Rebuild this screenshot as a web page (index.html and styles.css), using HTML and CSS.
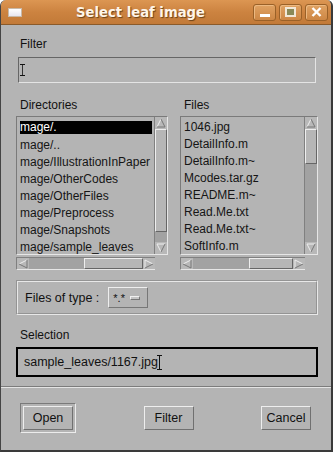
FILE: index.html
```html
<!DOCTYPE html>
<html lang="en">

<head>
    <meta charset="UTF-8">
    <title>Select leaf image</title>
    <link rel="stylesheet" href="styles.css">
</head>

<body>

    <div class="window">
        <div class="titlebar">
            <div class="app-icon"></div>
            <div class="title">Select leaf image</div>
            <div class="wm-buttons">
                <div class="wm-btn"><span class="min-glyph"></span></div>
                <div class="wm-btn"><span class="max-glyph"></span></div>
                <div class="wm-btn">
                    <svg width="11" height="10" viewBox="0 0 11 10"><path d="M1.5 1 L9.5 9 M9.5 1 L1.5 9" stroke="#fff" stroke-width="2.4"/></svg>
                </div>
            </div>
        </div>

        <div class="content">
            <div class="label">Filter</div>
            <div class="entry filter-entry"><span class="ibeam small"></span></div>

            <div class="lists">
                <div class="col">
                    <div class="label">Directories</div>
                    <div class="listbox">
                        <ul class="items">
                            <li class="selected">mage/.</li>
                            <li>mage/..</li>
                            <li>mage/IllustrationInPaper</li>
                            <li>mage/OtherCodes</li>
                            <li>mage/OtherFiles</li>
                            <li>mage/Preprocess</li>
                            <li>mage/Snapshots</li>
                            <li>mage/sample_leaves</li>
                        </ul>
                        <div class="vscroll">
                            <div class="arrow up"><svg width="10" height="10" viewBox="0 0 10 10"><path d="M1 9 L5 1" stroke="#eee"/><path d="M5 1 L9 9 L1 9" stroke="#777" fill="none"/></svg></div>
                            <div class="thumb" style="height: 103px"></div>
                            <div class="trough"></div>
                            <div class="arrow down"><svg width="10" height="10" viewBox="0 0 10 10"><path d="M1 1 L9 1 M1 1 L5 9" stroke="#eee" fill="none"/><path d="M5 9 L9 1" stroke="#777"/></svg></div>
                        </div>
                    </div>
                    <div class="hscroll">
                        <div class="arrow left"><svg width="10" height="10" viewBox="0 0 10 10"><path d="M9 1 L1 5" stroke="#eee"/><path d="M1 5 L9 9 L9 1" stroke="#777" fill="none"/></svg></div>
                        <div class="trough" style="width: 55px"></div>
                        <div class="thumb"></div>
                        <div class="arrow right"><svg width="10" height="10" viewBox="0 0 10 10"><path d="M1 9 L1 1 L9 5" stroke="#eee" fill="none"/><path d="M9 5 L1 9" stroke="#777"/></svg></div>
                    </div>
                </div>
                <div class="col">
                    <div class="label">Files</div>
                    <div class="listbox">
                        <ul class="items">
                            <li>1046.jpg</li>
                            <li>DetailInfo.m</li>
                            <li>DetailInfo.m~</li>
                            <li>Mcodes.tar.gz</li>
                            <li>README.m~</li>
                            <li>Read.Me.txt</li>
                            <li>Read.Me.txt~</li>
                            <li>SoftInfo.m</li>
                        </ul>
                        <div class="vscroll">
                            <div class="arrow up"><svg width="10" height="10" viewBox="0 0 10 10"><path d="M1 9 L5 1" stroke="#eee"/><path d="M5 1 L9 9 L1 9" stroke="#777" fill="none"/></svg></div>
                            <div class="thumb" style="height: 35px"></div>
                            <div class="trough"></div>
                            <div class="arrow down"><svg width="10" height="10" viewBox="0 0 10 10"><path d="M1 1 L9 1 M1 1 L5 9" stroke="#eee" fill="none"/><path d="M5 9 L9 1" stroke="#777"/></svg></div>
                        </div>
                    </div>
                    <div class="hscroll short">
                        <div class="arrow left"><svg width="10" height="10" viewBox="0 0 10 10"><path d="M9 1 L1 5" stroke="#eee"/><path d="M1 5 L9 9 L9 1" stroke="#777" fill="none"/></svg></div>
                        <div class="trough" style="width: 56px"></div>
                        <div class="thumb"></div>
                        <div class="arrow right"><svg width="10" height="10" viewBox="0 0 10 10"><path d="M1 9 L1 1 L9 5" stroke="#eee" fill="none"/><path d="M9 5 L1 9" stroke="#777"/></svg></div>
                    </div>
                </div>
            </div>

            <div class="types">
                <span>Files of type :</span>
                <div class="option-menu">
                    <span>*.*</span>
                    <span class="indicator"></span>
                </div>
            </div>

            <div class="label sel-label">Selection</div>
            <div class="entry selection">
                <span>sample_leaves/1167.jpg</span><span class="ibeam"></span>
            </div>
        </div>

        <div class="separator"></div>

        <div class="buttons">
            <div class="default-ring"><div class="button">Open</div></div>
            <div class="button">Filter</div>
            <div class="button">Cancel</div>
        </div>
    </div>

</body>

</html>
```

FILE: styles.css
```css
body {
    margin: 0;
    background-color: #ffffff;
    font-family: "Liberation Sans", Arial, sans-serif;
    font-size: 12px;
    color: #111;
}

.window {
    width: 333px;
    height: 452px;
    box-sizing: border-box;
    background-color: #b4b4b4;
    border-left: 1px solid #444;
    border-right: 2px solid #3a3a3a;
    border-bottom: 2px solid #3a3a3a;
    border-radius: 6px 6px 0 0;
    overflow: hidden;
}

.titlebar {
    height: 24px;
    display: flex;
    align-items: center;
    background: linear-gradient(#dc9652, #cc8340 50%, #c27a38);
    border-bottom: 1px solid #8a5a2a;
    padding: 0 3px 0 7px;
}

.app-icon {
    width: 14px;
    height: 9px;
    background: linear-gradient(#ffffff, #e8e6f0);
    border: 1px solid #c8b9a8;
    box-sizing: border-box;
}

.title {
    flex: 1;
    text-align: center;
    font-family: "DejaVu Sans", sans-serif;
    font-weight: bold;
    font-size: 13.2px;
    color: #fff5e8;
    text-shadow: 1px 1px 1px #6a4218;
    margin-left: 6px;
}

.wm-buttons {
    display: flex;
    gap: 3px;
}

.wm-btn {
    width: 23px;
    height: 17px;
    box-sizing: border-box;
    border: 1px solid #9a6128;
    border-radius: 3px;
    background: linear-gradient(#e0a262, #cd8745);
    box-shadow: inset 1px 1px 0 #ecb880;
    display: flex;
    align-items: center;
    justify-content: center;
}

.min-glyph {
    width: 10px;
    height: 3px;
    background-color: #fff;
    margin-top: 6px;
}

.max-glyph {
    width: 7px;
    height: 6px;
    border: 2px solid #f2e8d8;
    background-color: #8a8a58;
}

.content {
    padding: 11px 13px 0 15px;
}

.label {
    height: 16px;
    line-height: 16px;
    padding-left: 4px;
    margin-bottom: 5px;
}

.entry {
    box-sizing: border-box;
    display: flex;
    align-items: center;
}

.filter-entry {
    height: 26px;
    margin: 0 2px 14px 2px;
    border-top: 1px solid #666;
    border-left: 1px solid #666;
    border-right: 1px solid #e4e4e4;
    border-bottom: 1px solid #e4e4e4;
    padding-left: 3px;
}

.ibeam {
    display: inline-block;
    width: 1px;
    height: 14px;
    background-color: #111;
    position: relative;
}

.ibeam::before,
.ibeam::after {
    content: "";
    position: absolute;
    left: -2px;
    width: 5px;
    height: 1px;
    background-color: #111;
}

.ibeam::before {
    top: 0;
}

.ibeam::after {
    bottom: 0;
}

.ibeam.small {
    height: 12px;
    background-color: #333;
}

.lists {
    display: grid;
    grid-template-columns: 152px 138px;
    gap: 12px;
}

.lists .label {
    margin-bottom: 3px;
}

.listbox {
    height: 139px;
    display: flex;
    box-sizing: border-box;
    border-top: 1px solid #7a7a7a;
    border-left: 1px solid #7a7a7a;
    border-right: 1px solid #e6e6e6;
    border-bottom: 1px solid #e6e6e6;
}

.items {
    flex: 1;
    list-style: none;
    margin: 0;
    padding: 3px 0 0 3px;
    overflow: hidden;
    white-space: nowrap;
}

.items li {
    height: 17px;
    line-height: 15px;
    font-size: 12px;
    color: #151515;
}

.items li.selected {
    background-color: #000;
    color: #fff;
    width: 132px;
    line-height: 13px;
    height: 13px;
    margin-bottom: 4px;
    margin-top: 1px;
}

.vscroll {
    width: 12px;
    display: flex;
    flex-direction: column;
    border-left: 1px solid #808080;
    background-color: #a4a4a4;
}

.arrow {
    width: 12px;
    height: 12px;
    display: flex;
    align-items: center;
    justify-content: center;
    background-color: #b8b8b8;
    flex-shrink: 0;
}

.vscroll .thumb {
    box-sizing: border-box;
    border-top: 1px solid #eeeeee;
    border-left: 1px solid #eeeeee;
    border-bottom: 1px solid #666;
    border-right: 1px solid #666;
    background-color: #b6b6b6;
    flex-shrink: 0;
}

.vscroll .trough {
    flex: 1;
    background-color: #a2a2a2;
}

.hscroll {
    margin-top: 2px;
    width: 139px;
    height: 13px;
    display: flex;
    box-sizing: border-box;
    border-top: 1px solid #808080;
    border-left: 1px solid #808080;
    border-bottom: 1px solid #e6e6e6;
    background-color: #a2a2a2;
}

.hscroll.short {
    width: 125px;
}

.hscroll .arrow {
    height: 11px;
}

.hscroll .trough {
    background-color: #a2a2a2;
}

.hscroll .thumb {
    flex: 1;
    box-sizing: border-box;
    border-top: 1px solid #eeeeee;
    border-left: 1px solid #eeeeee;
    border-bottom: 1px solid #666;
    border-right: 1px solid #666;
    background-color: #b6b6b6;
}

.types {
    margin-top: 10px;
    height: 35px;
    box-sizing: border-box;
    border: 2px groove #e8e8e8;
    display: flex;
    align-items: center;
    padding-left: 7px;
    gap: 9px;
    font-size: 12.5px;
}

.option-menu {
    width: 40px;
    height: 21px;
    box-sizing: border-box;
    border-top: 1px solid #eeeeee;
    border-left: 1px solid #eeeeee;
    border-bottom: 1px solid #777;
    border-right: 1px solid #777;
    display: flex;
    align-items: center;
    padding-left: 4px;
    gap: 5px;
    font-size: 11px;
}

.indicator {
    width: 10px;
    height: 4px;
    box-sizing: border-box;
    border-top: 1px solid #f0f0f0;
    border-left: 1px solid #f0f0f0;
    border-bottom: 1px solid #777;
    border-right: 1px solid #777;
    background-color: #c4c4c4;
}

.sel-label {
    margin-top: 12px;
    margin-bottom: 4px;
}

.selection {
    height: 30px;
    border: 2px solid #000;
    padding-left: 6px;
    font-size: 12.5px;
}

.selection .ibeam {
    margin-left: 1px;
    height: 15px;
}

.separator {
    margin-top: 9px;
    height: 0;
    border-top: 1px solid #7c7c7c;
    border-bottom: 1px solid #e4e4e4;
}

.buttons {
    display: flex;
    justify-content: space-between;
    align-items: center;
    padding: 0 20px 0 19px;
    margin-top: 15px;
}

.default-ring {
    padding: 2px;
    border-top: 1px solid #7a7a7a;
    border-left: 1px solid #7a7a7a;
    border-bottom: 1px solid #ececec;
    border-right: 1px solid #ececec;
}

.button {
    width: 50px;
    height: 24px;
    box-sizing: border-box;
    border-top: 1px solid #eeeeee;
    border-left: 1px solid #eeeeee;
    border-bottom: 1px solid #707070;
    border-right: 1px solid #707070;
    display: flex;
    align-items: center;
    justify-content: center;
    font-size: 12.5px;
    color: #111;
}
```
